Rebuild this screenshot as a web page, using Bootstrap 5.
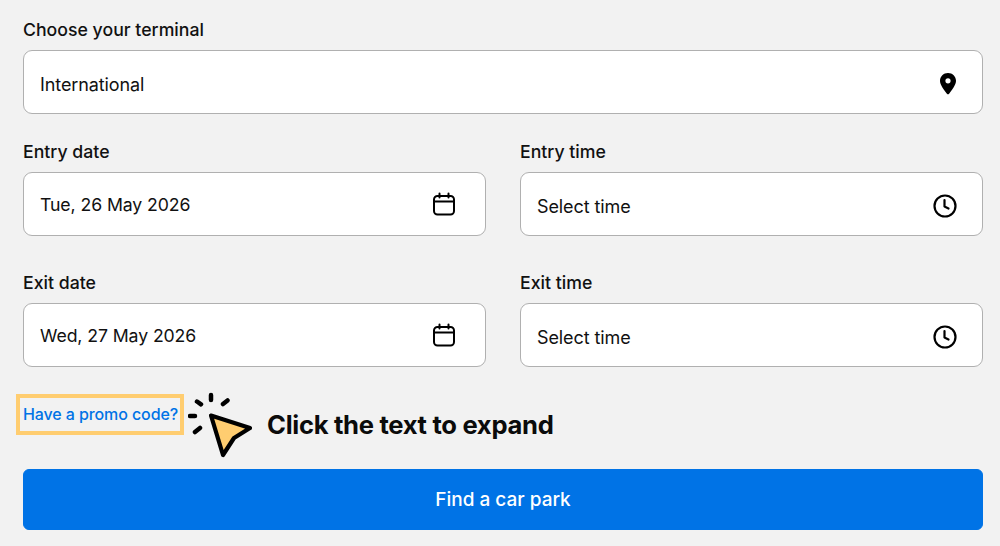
<!DOCTYPE html>
<html lang="en">
<head>
  <meta charset="UTF-8" />
  <title>Find a car park</title>
  <meta name="viewport" content="width=device-width, initial-scale=1.0"/>
  <link href="https://cdn.jsdelivr.net/npm/bootstrap@5.3.3/dist/css/bootstrap.min.css" rel="stylesheet">
  <style>
    html, body { height: 546px; overflow: hidden; }
    body { background: #f2f2f2; color: #111; font-family: Inter, "Liberation Sans", sans-serif; }
    .page { width: 960px; margin-left: 23px; padding-top: 20px; }
    .field-label { font-size: 17.7px; font-weight: 500; line-height: 20px; margin-bottom: 10px; }
    .field { height: 64px; background: #fff; border: 1px solid #b0b0b0; border-radius: 9px; font-size: 18px; letter-spacing: -0.1px; padding-left: 16px; padding-right: 25px; }
    .field .low { padding-top: 4px; }
    .field .date { font-size: 17.7px; padding-top: 2px; }
    .field .icon-low { margin-top: 4px; }
    .field.date-field { padding-right: 29px; }
    .col-left { width: 463px; }
    .col-right { width: 463px; }
    .columns { gap: 34px; margin-top: 28px; }
    .columns.second { margin-top: 37px; }
    .promo-row { margin-top: 25px; margin-left: -7px; height: 77px; }
    .promo-link { display: block; border: 4px solid #ffcd70; padding: 0 3px; height: 41px; line-height: 33px; color: #0073e6; font-size: 16px; font-weight: 500; text-decoration: none; margin-top: 2px; width: 168px; white-space: nowrap; letter-spacing: -0.1px; }
    .cursor { margin-left: 4px; }
    .hint { font-size: 25.6px; font-weight: 700; color: #0b0b0b; letter-spacing: -0.3px; line-height: 34px; margin-top: 16px; margin-left: 11px; }
    .btn-find { height: 61px; background: #0073e6; border-color: #0073e6; border-radius: 6px; font-size: 19px; font-weight: 500; color: #fff; padding-top: 8px; }
  </style>
</head>
<body>
  <div class="page">
    <div class="field-label">Choose your terminal</div>
    <div class="field d-flex align-items-center justify-content-between">
      <span class="low">International</span>
      <svg class="icon-low" width="18" height="24" viewBox="0 0 18 24"><path fill="#000" fill-rule="evenodd" d="M9 1C4.500 1 1 4.400 1 8.800c0 3 2 6.800 6.900 12.900.6.700 1.600.7 2.200 0C15 15.600 17 11.800 17 8.800 17 4.400 13.500 1 9 1zm0 5.200a2.600 2.600 0 1 1 0 5.200 2.600 2.600 0 0 1 0-5.200z"/></svg>
    </div>

    <div class="d-flex columns">
      <div class="col-left">
        <div class="field-label">Entry date</div>
        <div class="field date-field d-flex align-items-center justify-content-between">
          <span class="date">Tue, 26 May 2026</span>
          <svg width="24" height="24" viewBox="0 0 24 24" fill="none" stroke="#000" stroke-width="2" stroke-linecap="round"><rect x="2" y="4" width="20" height="18.500" rx="3.500"/><path d="M2 9.500h20M7.500 1.500v4M16.500 1.500v4"/></svg>
        </div>
      </div>
      <div class="col-right">
        <div class="field-label">Entry time</div>
        <div class="field d-flex align-items-center justify-content-between">
          <span class="low">Select time</span>
          <svg class="icon-low" width="24" height="24" viewBox="0 0 24 24" fill="none" stroke="#000" stroke-width="2.200" stroke-linecap="round" stroke-linejoin="round"><circle cx="12" cy="12" r="10.500"/><path d="M11.500 6v6.500l4 2"/></svg>
        </div>
      </div>
    </div>

    <div class="d-flex columns second">
      <div class="col-left">
        <div class="field-label">Exit date</div>
        <div class="field date-field d-flex align-items-center justify-content-between">
          <span class="date">Wed, 27 May 2026</span>
          <svg width="24" height="24" viewBox="0 0 24 24" fill="none" stroke="#000" stroke-width="2" stroke-linecap="round"><rect x="2" y="4" width="20" height="18.500" rx="3.500"/><path d="M2 9.500h20M7.500 1.500v4M16.500 1.500v4"/></svg>
        </div>
      </div>
      <div class="col-right">
        <div class="field-label">Exit time</div>
        <div class="field d-flex align-items-center justify-content-between">
          <span class="low">Select time</span>
          <svg class="icon-low" width="24" height="24" viewBox="0 0 24 24" fill="none" stroke="#000" stroke-width="2.200" stroke-linecap="round" stroke-linejoin="round"><circle cx="12" cy="12" r="10.500"/><path d="M11.500 6v6.500l4 2"/></svg>
        </div>
      </div>
    </div>

    <div class="d-flex align-items-start promo-row">
      <a class="promo-link" href="#">Have a promo code?</a>
      <svg class="cursor flex-shrink-0" width="68" height="68" viewBox="0 0 68 68" fill="none" stroke="#000" stroke-linecap="round" stroke-linejoin="round">
        <path d="M23 23.500 62 36 46 46 35 63z" fill="#ffcd70" stroke-width="4.200"/>
        <path d="M23 3v5M9 9.500l4 2.800M39.500 8.500 35 12M2 24h5M7 40l5-4" stroke-width="4.500"/>
      </svg>
      <span class="hint">Click the text to expand</span>
    </div>

    <button class="btn btn-find w-100" type="button">Find a car park</button>
  </div>
  <script src="https://cdn.jsdelivr.net/npm/bootstrap@5.3.3/dist/js/bootstrap.bundle.min.js"></script>
</body>
</html>
